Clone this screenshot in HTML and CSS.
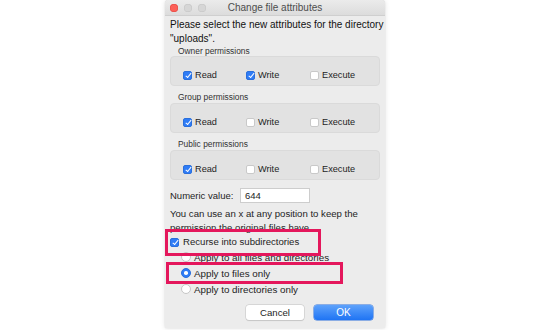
FILE: index.html
```html
<!DOCTYPE html>
<html>
<head>
<meta charset="utf-8">
<link rel="stylesheet" href="styles.css">
</head>
<body>
<div class="window">
  <div class="titlebar">
    <div class="lights"><span class="light red"></span><span class="light"></span><span class="light"></span></div>
    <div class="title">Change file attributes</div>
    <div></div>
  </div>
  <div class="content">
    <p class="intro">Please select the new attributes for the directory<br>"uploads".</p>

    <div class="group-label first">Owner permissions</div>
    <div class="box">
      <div class="opt"><span class="cb on"></span>Read</div>
      <div class="opt"><span class="cb on"></span>Write</div>
      <div class="opt"><span class="cb"></span>Execute</div>
    </div>

    <div class="group-label">Group permissions</div>
    <div class="box">
      <div class="opt"><span class="cb on"></span>Read</div>
      <div class="opt"><span class="cb"></span>Write</div>
      <div class="opt"><span class="cb"></span>Execute</div>
    </div>

    <div class="group-label">Public permissions</div>
    <div class="box">
      <div class="opt"><span class="cb on"></span>Read</div>
      <div class="opt"><span class="cb"></span>Write</div>
      <div class="opt"><span class="cb"></span>Execute</div>
    </div>

    <div class="numeric"><span class="num-label">Numeric value:</span><span class="input">644</span></div>
    <p class="help">You can use an x at any position to keep the<br>permission the original files have.</p>

    <div class="recurse"><span class="cb on"></span>Recurse into subdirectories</div>
    <div class="radios">
      <div class="radio-row"><span class="rb"></span>Apply to all files and directories</div>
      <div class="radio-row"><span class="rb on"></span>Apply to files only</div>
      <div class="radio-row"><span class="rb"></span>Apply to directories only</div>
    </div>

    <div class="buttons"><span class="btn">Cancel</span><span class="btn primary">OK</span></div>
  </div>
  <div class="mark mark1"></div>
  <div class="mark mark2"></div>
</div>
</body>
</html>
```

FILE: styles.css
```css
html, body {
  margin: 0;
  padding: 0;
  background: #ffffff;
}
body {
  display: flex;
  justify-content: center;
  font-family: "Liberation Sans", Arial, sans-serif;
  color: #1e1e1e;
  width: 550px;
  height: 330px;
  overflow: hidden;
}
.window {
  position: relative;
  width: 220px;
  height: 328px;
  background: #ececec;
  border-radius: 4px 4px 0 0;
  box-shadow: 0 0 5px rgba(0, 0, 0, 0.12), 0 0 1px rgba(0, 0, 0, 0.2);
}
.titlebar {
  height: 15px;
  border-bottom: 1px solid #cfcfcf;
  background: linear-gradient(#ebebeb, #dcdcdc);
  border-radius: 4px 4px 0 0;
  display: grid;
  grid-template-columns: 1fr auto 1fr;
  align-items: center;
}
.lights {
  display: flex;
  gap: 6px;
  padding-left: 5px;
}
.light {
  width: 8px;
  height: 8px;
  border-radius: 50%;
  background: #d6d6d6;
  box-shadow: inset 0 0 0 0.5px #c4c4c4;
}
.light.red {
  background: #fc5f57;
  box-shadow: inset 0 0 0 0.5px #e0443e;
}
.title {
  font-size: 10px;
  color: #4d4d4d;
  line-height: 16px;
}
.content {
  padding: 0 5px;
}
.intro {
  margin: 2px 0 0;
  font-size: 10px;
  line-height: 14px;
  white-space: nowrap;
  color: #111;
}
.group-label {
  font-size: 8.4px;
  line-height: 11px;
  padding-left: 8px;
  color: #333;
  margin-top: 6px;
}
.group-label.first {
  margin-top: 0;
  line-height: 10px;
}
.box {
  box-sizing: border-box;
  height: 30px;
  background: #e2e2e2;
  border: 1px solid #dadada;
  border-radius: 4px;
  padding: 12px 0 0 12px;
  display: grid;
  grid-template-columns: 63px 64px auto;
  align-content: start;
}
.opt {
  display: flex;
  align-items: center;
  gap: 3px;
  font-size: 9.2px;
  line-height: 12px;
  height: 12px;
  color: #1e1e1e;
}
.cb {
  box-sizing: border-box;
  width: 9px;
  height: 9px;
  border-radius: 2px;
  background: #fff;
  border: 0.5px solid #c9c9c9;
  position: relative;
  flex: none;
}
.cb.on {
  background: #2f7cf6;
  border-color: #2a6fdc;
}
.cb.on::after {
  content: "";
  position: absolute;
  left: 2.6px;
  top: 0.6px;
  width: 2.4px;
  height: 4.8px;
  border-right: 1.4px solid #fff;
  border-bottom: 1.4px solid #fff;
  transform: rotate(40deg);
}
.numeric {
  margin-top: 8px;
  display: flex;
  align-items: center;
  height: 15px;
  font-size: 9.5px;
}
.num-label {
  width: 70px;
}
.input {
  box-sizing: border-box;
  width: 70px;
  height: 15px;
  background: #fff;
  border: 1px solid #cdcdcd;
  padding-left: 4px;
  line-height: 13px;
  font-size: 9.5px;
}
.help {
  margin: 4px 0 0;
  font-size: 9.6px;
  line-height: 14px;
  white-space: nowrap;
}
.recurse {
  display: flex;
  align-items: center;
  gap: 4px;
  font-size: 9.6px;
  line-height: 14px;
  height: 14px;
}
.radios {
  padding-left: 11px;
}
.radio-row {
  display: flex;
  align-items: center;
  gap: 3px;
  height: 16px;
  font-size: 9.8px;
  white-space: nowrap;
}
.rb {
  box-sizing: border-box;
  width: 10px;
  height: 10px;
  border-radius: 50%;
  background: #fff;
  border: 0.5px solid #c6c6c6;
  flex: none;
  position: relative;
}
.rb.on {
  background: #2f7cf6;
  border-color: #2a6fdc;
}
.rb.on::after {
  content: "";
  position: absolute;
  left: 50%;
  top: 50%;
  width: 3.6px;
  height: 3.6px;
  margin: -1.8px 0 0 -1.8px;
  border-radius: 50%;
  background: #fff;
}
.buttons {
  margin-top: 8px;
  display: flex;
  justify-content: flex-end;
  gap: 10px;
  padding-right: 7px;
}
.btn {
  box-sizing: border-box;
  width: 58px;
  height: 15px;
  border-radius: 3px;
  background: #fff;
  box-shadow: 0 0 0 0.5px #c4c4c4, 0 0.5px 1px rgba(0, 0, 0, 0.15);
  font-size: 9.6px;
  line-height: 15px;
  text-align: center;
  color: #1e1e1e;
}
.btn.primary {
  width: 59px;
  background: linear-gradient(#5ea2fb, #1f74f4);
  box-shadow: 0 0 0 0.5px #2a6fdc;
  color: #fff;
  font-size: 10px;
}
.mark {
  position: absolute;
  box-sizing: border-box;
  border: 3px solid #e4175c;
}
.mark1 {
  left: 0;
  top: 229px;
  width: 156px;
  height: 27px;
}
.mark2 {
  left: 1px;
  top: 262px;
  width: 177px;
  height: 22px;
}
```
